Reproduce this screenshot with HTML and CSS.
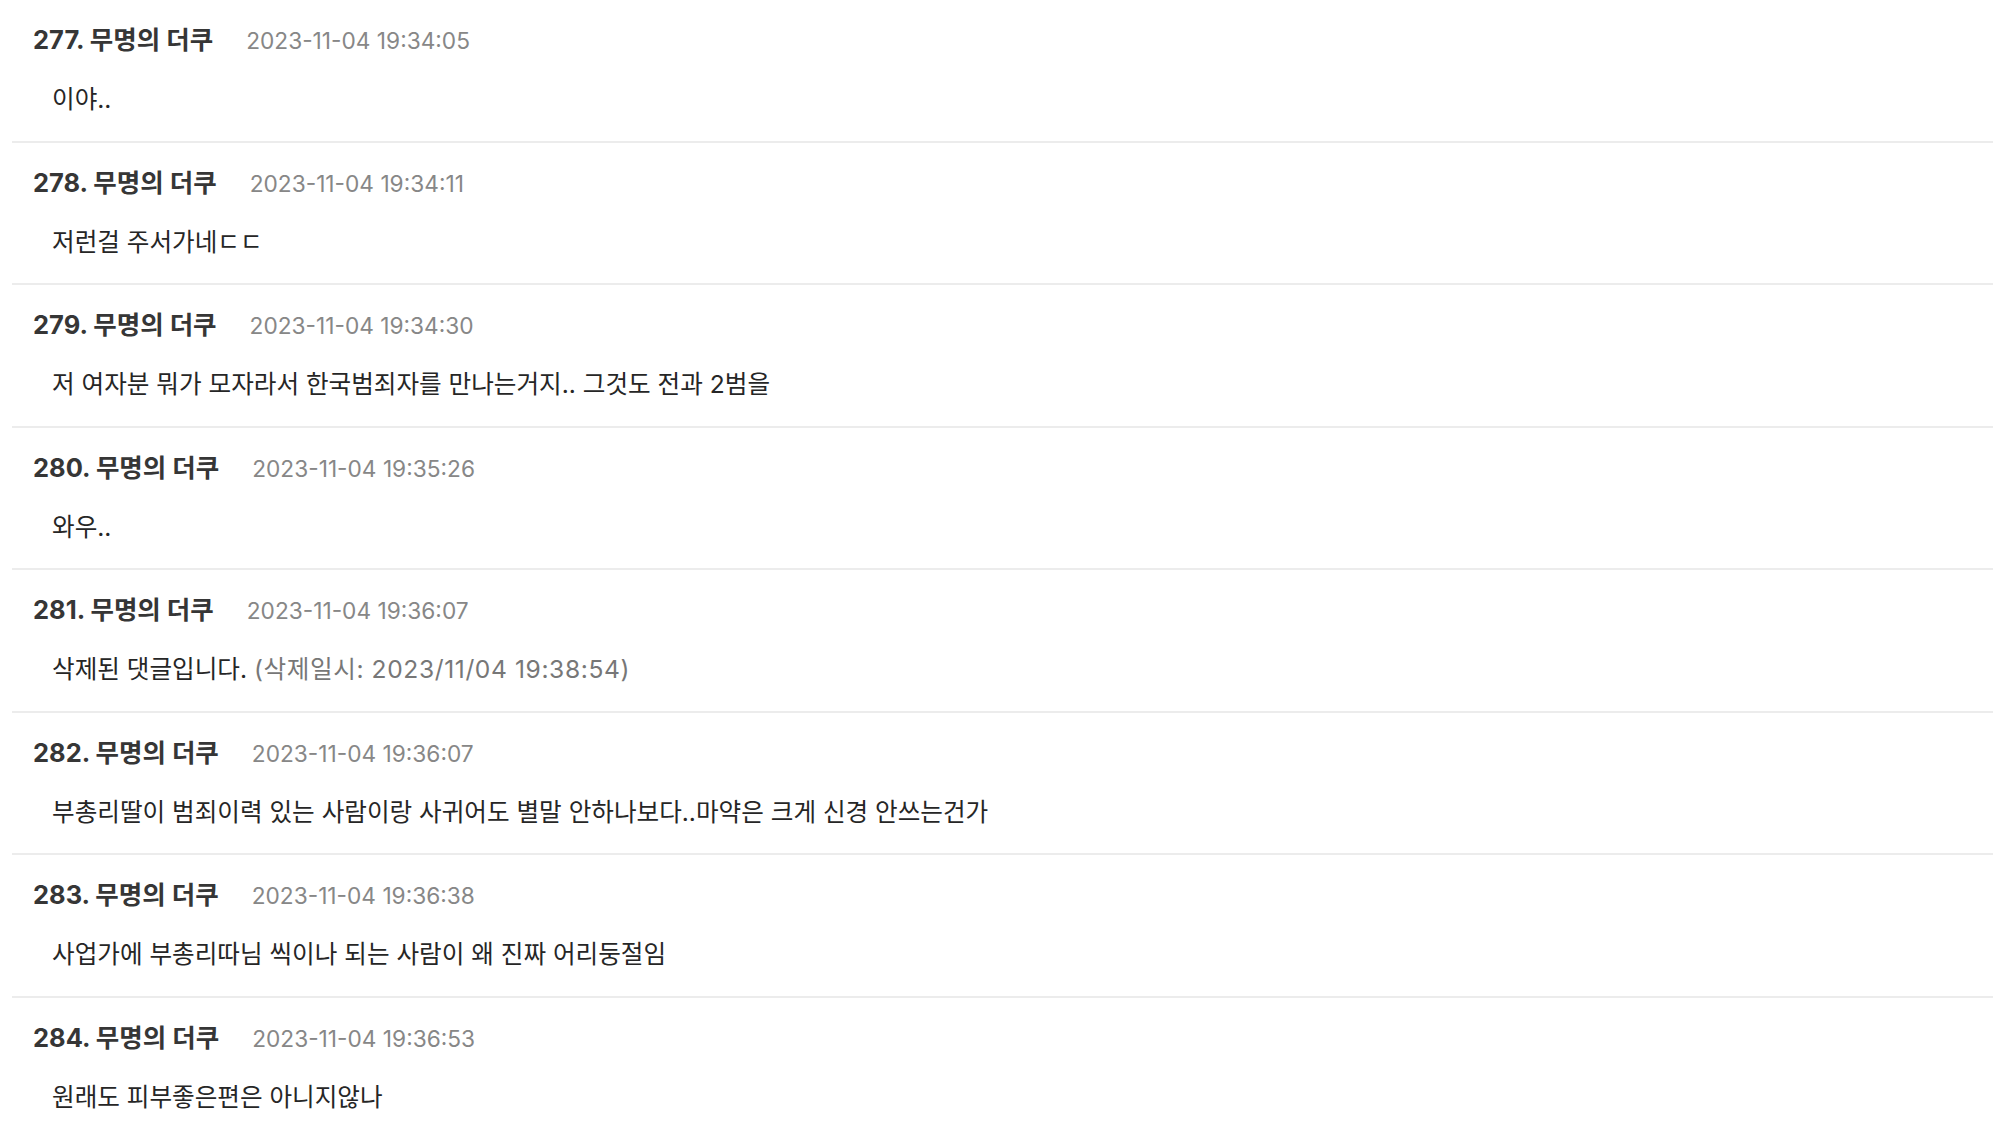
FILE: index.html
```html
<!DOCTYPE html>
<html lang="ko">
<head>
<meta charset="utf-8">
<title>댓글</title>
<link rel="stylesheet" href="styles.css">
</head>
<body>
<ul class="comments">
  <li class="comment">
    <div class="meta"><span class="name">277. 무명의 더쿠</span><span class="date">2023-11-04 19:34:05</span></div>
    <div class="body">이야..</div>
  </li>
  <li class="comment">
    <div class="meta"><span class="name">278. 무명의 더쿠</span><span class="date">2023-11-04 19:34:11</span></div>
    <div class="body">저런걸 주서가네ㄷㄷ</div>
  </li>
  <li class="comment">
    <div class="meta"><span class="name">279. 무명의 더쿠</span><span class="date">2023-11-04 19:34:30</span></div>
    <div class="body">저 여자분 뭐가 모자라서 한국범죄자를 만나는거지.. 그것도 전과 2범을</div>
  </li>
  <li class="comment">
    <div class="meta"><span class="name">280. 무명의 더쿠</span><span class="date">2023-11-04 19:35:26</span></div>
    <div class="body">와우..</div>
  </li>
  <li class="comment">
    <div class="meta"><span class="name">281. 무명의 더쿠</span><span class="date">2023-11-04 19:36:07</span></div>
    <div class="body">삭제된 댓글입니다. <span class="deleted">(삭제일시: 2023/11/04 19:38:54)</span></div>
  </li>
  <li class="comment">
    <div class="meta"><span class="name">282. 무명의 더쿠</span><span class="date">2023-11-04 19:36:07</span></div>
    <div class="body">부총리딸이 범죄이력 있는 사람이랑 사귀어도 별말 안하나보다..마약은 크게 신경 안쓰는건가</div>
  </li>
  <li class="comment">
    <div class="meta"><span class="name">283. 무명의 더쿠</span><span class="date">2023-11-04 19:36:38</span></div>
    <div class="body">사업가에 부총리따님 씩이나 되는 사람이 왜 진짜 어리둥절임</div>
  </li>
  <li class="comment">
    <div class="meta"><span class="name">284. 무명의 더쿠</span><span class="date">2023-11-04 19:36:53</span></div>
    <div class="body">원래도 피부좋은편은 아니지않나</div>
  </li>
</ul>
</body>
</html>
```

FILE: styles.css
```css
html, body {
  margin: 0;
  padding: 0;
  background: #ffffff;
}

body {
  font-family: Inter, "Noto Sans CJK KR", sans-serif;
  color: #333333;
  overflow: hidden;
}

.comments {
  list-style: none;
  margin: 0 5px 0 12px;
  padding: 0;
}

.comment {
  display: flex;
  flex-direction: column;
  gap: 24px;
  padding: 22px 0 23.5px 21px;
  border-bottom: 2px solid #ececec;
}

.meta {
  display: flex;
  align-items: baseline;
  gap: 33px;
  height: 36px;
  line-height: 36px;
}

.name {
  font-size: 25.5px;
  font-weight: 700;
  color: #363636;
}

.date {
  font-size: 22.7px;
  color: #878787;
}

.body {
  padding-left: 19px;
  font-size: 24.6px;
  line-height: 35px;
  height: 35px;
  color: #262626;
}

.deleted {
  color: #777777;
  letter-spacing: 0.6px;
}
```
